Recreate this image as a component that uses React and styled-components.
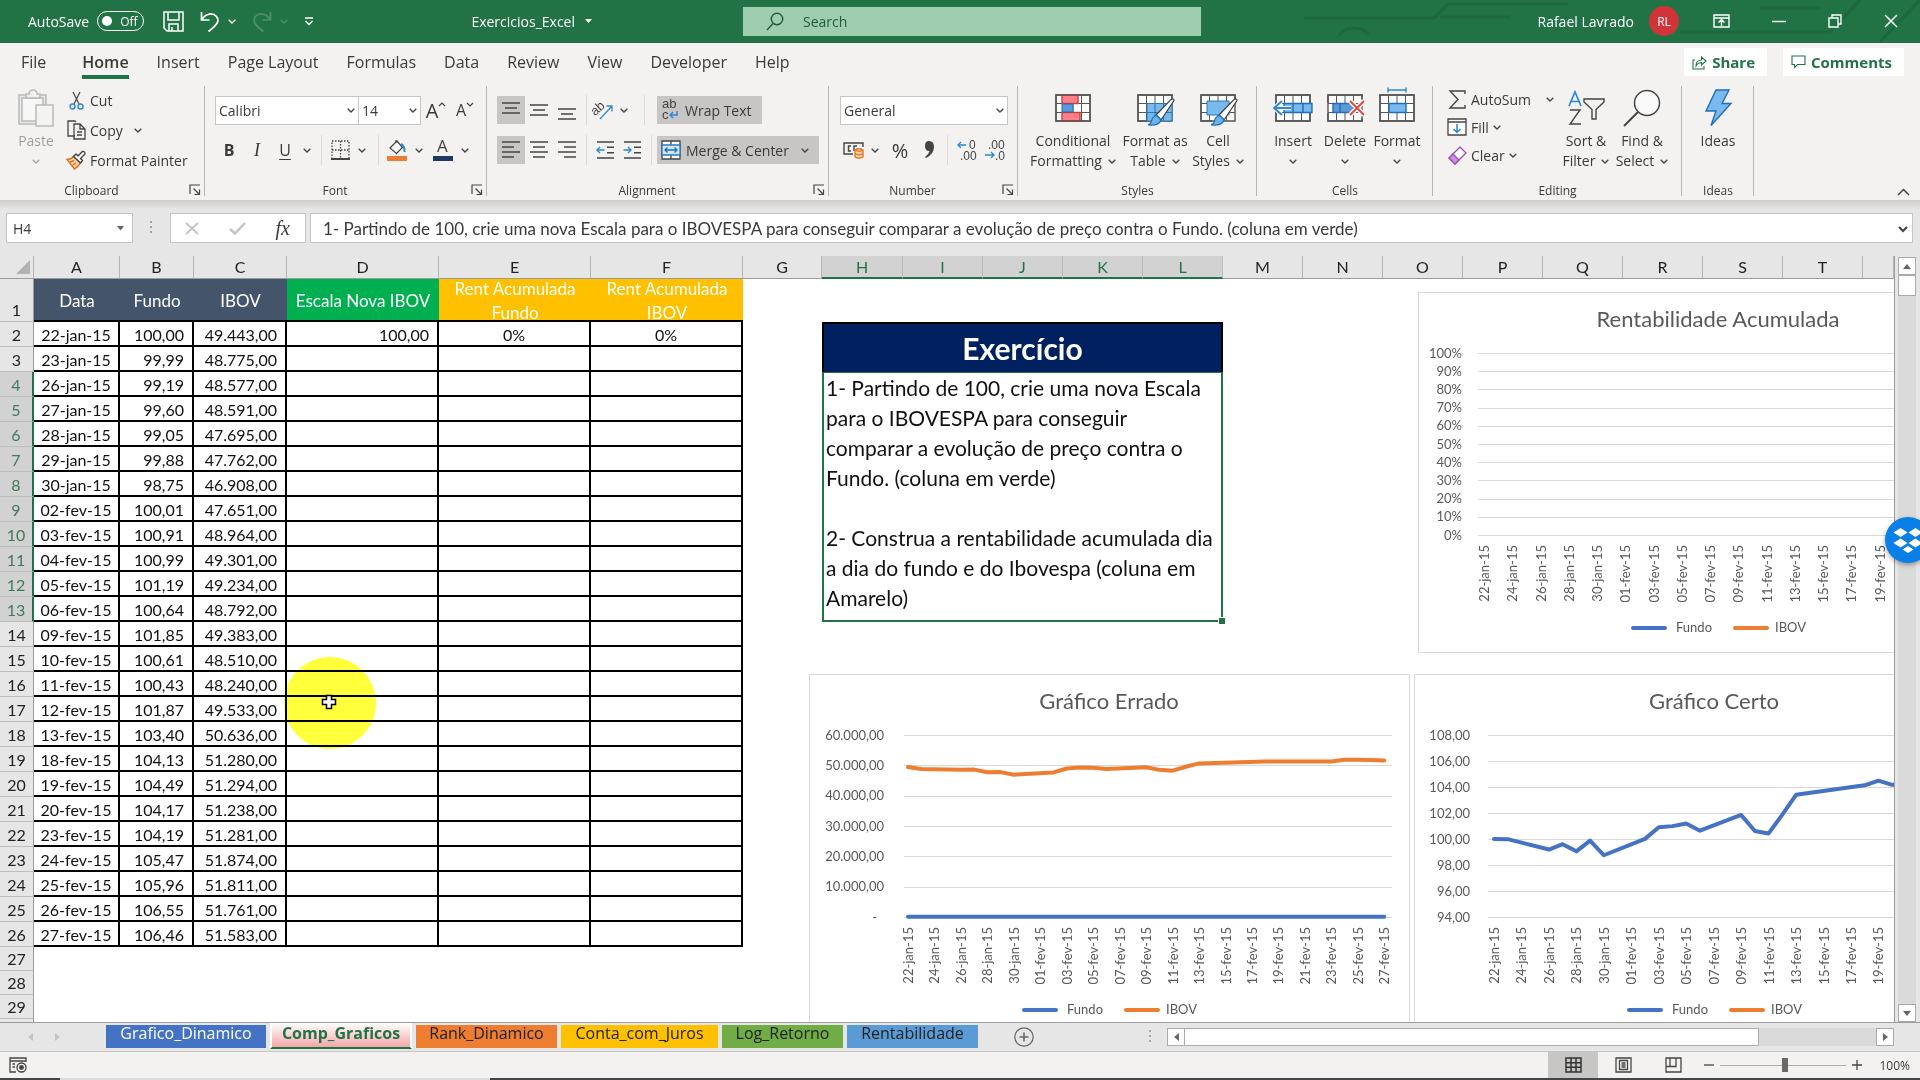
import React from "react";
import styled, { createGlobalStyle, css } from "styled-components";

const UI = `"Open Sans", "Noto Sans", sans-serif`;
const CELL = `Lato, "Open Sans", sans-serif`;
const GREEN = "#217346";
const BLUE = "#4472c4";
const ORANGE = "#ed7d31";

const Global = createGlobalStyle`
  *, *::before, *::after { box-sizing: border-box; }
  html, body { margin: 0; padding: 0; }
  body { font-family: ${UI}; color: #3b3a39; background: #e6e6e6; overflow: hidden; }
  button, input, select { font: inherit; color: inherit; margin: 0; }
  button { background: none; border: 0; padding: 0; white-space: nowrap; }
  svg { display: block; flex: none; overflow: visible; }
`;

const Page = styled.div`
  height: 100vh;
  display: flex;
  flex-direction: column;
  position: relative;
  overflow: hidden;
`;

/* ---------- title bar ---------- */
const TitleBar = styled.header`
  height: 43px;
  flex: none;
  display: grid;
  grid-template-columns: minmax(0, 743fr) minmax(240px, 458fr) minmax(0, 719fr);
  align-items: center;
  background: ${GREEN};
  color: #fff;
  font-size: 14px;
  position: relative;
  border-bottom: 1px solid #2c6b48;
`;
const Circuit = styled.svg`
  position: absolute;
  top: 0;
  right: 0;
`;
const TitleLeft = styled.div`
  display: flex;
  align-items: center;
  padding: 0 151px 0 28px;
`;
const SwitchLabel = styled.label`
  display: flex;
  align-items: center;
  gap: 8px;
`;
const Pill = styled.span`
  width: 47px;
  height: 20px;
  border: 1px solid #fff;
  border-radius: 10px;
  display: flex;
  align-items: center;
  gap: 8px;
  padding-left: 4px;
  font-size: 12px;
`;
const SwitchInput = styled.input`
  appearance: none;
  width: 10px;
  height: 10px;
  border-radius: 50%;
  background: #fff;
`;
const QuickTools = styled.div`
  display: flex;
  align-items: center;
  gap: 16px;
  margin-left: 19px;
`;
const ToolPair = styled.button`
  display: flex;
  align-items: center;
  gap: 8px;
  opacity: ${(p) => (p.$faded ? 0.2 : 1)};
`;
const FileName = styled.button`
  display: flex;
  align-items: center;
  gap: 10px;
  margin-left: auto;
`;
const Search = styled.label`
  height: 29px;
  background: #9fcdb0;
  color: #1f5c3a;
  display: flex;
  align-items: center;
  gap: 19px;
  padding-left: 23px;
`;
const SearchInput = styled.input`
  flex: 1;
  min-width: 0;
  border: 0;
  outline: 0;
  background: none;
  padding: 0;
  &::placeholder { color: #1f5c3a; opacity: 1; }
`;
const TitleRight = styled.div`
  display: flex;
  justify-content: flex-end;
  align-items: center;
  padding-right: 22px;
  position: relative;
`;
const Avatar = styled.span`
  width: 30px;
  height: 30px;
  margin: 0 34px 0 15px;
  border-radius: 50%;
  background: #d13438;
  font-size: 12px;
  display: flex;
  align-items: center;
  justify-content: center;
`;
const WindowButtons = styled.div`
  display: flex;
  align-items: center;
  gap: 42px;
`;

/* ---------- menu tabs ---------- */
const MenuBar = styled.nav`
  height: 39px;
  flex: none;
  display: flex;
  align-items: flex-start;
  gap: 28px;
  padding: 0 16px 0 21px;
  background: #f3f2f1;
  font-size: 16px;
`;
const MenuTab = styled.button`
  height: 36px;
  line-height: 26px;
  padding-top: 6px;
  border-bottom: 4px solid transparent;
  ${(p) =>
    p.$active &&
    css`
      font-weight: 600;
      margin-left: 8px;
      border-color: ${GREEN};
    `}
`;
const MenuActions = styled.div`
  display: flex;
  gap: 16px;
  margin: 5px 0 0 auto;
`;
const ActionButton = styled.button`
  height: 28px;
  display: flex;
  align-items: center;
  gap: 5px;
  padding: 0 12px 0 8px;
  background: #fff;
  color: ${GREEN};
  font-size: 15px;
  font-weight: 700;
`;

/* ---------- ribbon ---------- */
const Ribbon = styled.div`
  height: 118px;
  flex: none;
  display: flex;
  background: #f3f2f1;
  font-size: 14px;
`;
const Group = styled.section`
  width: ${(p) => p.$w}px;
  flex: none;
  display: flex;
  flex-direction: column;
  position: relative;
  &::after {
    content: "";
    position: absolute;
    right: 0;
    top: 4px;
    bottom: 4px;
    width: 1px;
    background: #b8b6b4;
  }
`;
const GroupBody = styled.div`
  flex: 1;
  display: flex;
  padding: ${(p) => p.$pad};
`;
const GroupFooter = styled.footer`
  height: 18px;
  line-height: 18px;
  font-size: 12px;
  text-align: center;
  padding-right: ${(p) => (p.$launch ? 22 : 0)}px;
`;
const Launcher = styled.button`
  position: absolute;
  right: 4px;
  bottom: 4px;
`;
const Stack = styled.div`
  display: flex;
  flex-direction: column;
  gap: ${(p) => p.$gap || 0}px;
  width: ${(p) => (p.$w ? `${p.$w}px` : "auto")};
`;
const Row = styled.div`
  display: flex;
  align-items: center;
  height: 28px;
`;
const BigButton = styled.button`
  width: ${(p) => p.$w}px;
  display: flex;
  flex-direction: column;
  align-items: center;
  line-height: 20px;
  align-self: flex-start;
  opacity: ${(p) => (p.$faded ? 0.45 : 1)};
`;
const BigIcon = styled.span`
  height: 46px;
  display: flex;
  align-items: center;
`;
const BigLine = styled.span`
  display: flex;
  align-items: center;
  justify-content: center;
  gap: 6px;
  min-height: 20px;
`;
const SmallButton = styled.button`
  height: ${(p) => p.$h}px;
  display: flex;
  align-items: center;
  gap: ${(p) => p.$gap || 6}px;
`;
const SmallIcon = styled.span`
  width: 20px;
  display: flex;
  justify-content: center;
`;
const Tool = styled.button`
  width: ${(p) => p.$w || 28}px;
  height: 28px;
  display: flex;
  align-items: center;
  justify-content: center;
  background: ${(p) => (p.$on ? "#c8c6c4" : "none")};
  font-size: 16px;
`;
const Caret = styled.span`
  align-self: flex-start;
  padding-top: 6px;
`;
const WideTool = styled.button`
  height: 28px;
  display: flex;
  align-items: center;
  gap: 5px;
  padding: 0 10px 0 4px;
  background: #c8c6c4;
`;
const Divider = styled.span`
  width: 1px;
  height: 30px;
  margin: 0 ${(p) => p.$m || 8}px;
  background: #dddbd9;
`;
const Combo = styled.span`
  position: relative;
  width: ${(p) => p.$w}px;
  height: 29px;
  display: flex;
  align-items: center;
  background: #fff;
  border: 1px solid #c8c6c4;
  & + & { border-left: 0; }
  svg { position: absolute; right: 3px; pointer-events: none; }
`;
const ComboSelect = styled.select`
  appearance: none;
  width: 100%;
  height: 100%;
  border: 0;
  background: none;
  padding: 0 0 0 3px;
  outline: 0;
`;
const Glyph = styled.span`
  font-size: ${(p) => p.$s || 16}px;
  font-weight: ${(p) => p.$wt || 400};
  font-style: ${(p) => (p.$it ? "italic" : "normal")};
  font-family: ${(p) => (p.$serif ? `"Liberation Serif", serif` : UI)};
  text-decoration: ${(p) => (p.$u ? "underline" : "none")};
  text-underline-offset: 3px;
`;
const Collapse = styled.button`
  margin: auto 10px 4px auto;
`;

/* ---------- formula bar ---------- */
const FormulaBar = styled.div`
  height: 56px;
  flex: none;
  display: flex;
  align-items: flex-start;
  padding: 13px 7px 0 6px;
  background: linear-gradient(#cfcdcb, #e6e6e6 9px);
  font-size: 14px;
`;
const NameBox = styled.label`
  position: relative;
  width: 127px;
  height: 30px;
  border: 1px solid #c6c6c6;
  background: #fff;
  display: flex;
  align-items: center;
  svg { position: absolute; right: 8px; }
`;
const PlainInput = styled.input`
  width: 100%;
  height: 100%;
  border: 0;
  outline: 0;
  background: none;
  padding: 0 0 0 ${(p) => p.$pl}px;
`;
const DotHandle = styled.span`
  width: 37px;
  height: 30px;
  display: flex;
  align-items: center;
  justify-content: center;
`;
const FormulaActions = styled.div`
  width: 136px;
  height: 30px;
  margin-right: 4px;
  border: 1px solid #c6c6c6;
  background: #fff;
  display: flex;
  align-items: center;
  justify-content: space-between;
  padding: 0 15px 0 14px;
`;
const FormulaField = styled.label`
  position: relative;
  flex: 1;
  height: 30px;
  border: 1px solid #c6c6c6;
  background: #fff;
  font-family: ${CELL};
  font-size: 17px;
  svg { position: absolute; right: 4px; top: 12px; }
`;

/* ---------- sheet ---------- */
const Workspace = styled.main`
  flex: 1;
  min-height: 0;
  display: flex;
`;
const Sheet = styled.div`
  flex: 1;
  min-width: 0;
  position: relative;
  overflow: hidden;
  background: #fff;
  border-right: 1px solid #9b9b9b;
`;
const Grid = styled.table`
  width: 100%;
  table-layout: fixed;
  border-collapse: separate;
  border-spacing: 0;
  font-family: ${CELL};
  font-size: 16px;
  line-height: 20px;
  color: #111;
  th, td { padding: 0; }
`;
const ColHead = styled.th`
  height: 23px;
  font-weight: 400;
  background: ${(p) => (p.$on ? "#d2d2d2" : "#e6e6e6")};
  color: ${(p) => (p.$on ? GREEN : "#222")};
  border-right: 1px solid ${(p) => (p.$on ? "#bdbdbd" : "#b5b5b5")};
  border-bottom: ${(p) => (p.$on ? `2px solid ${GREEN}` : "1px solid #9b9b9b")};
`;
const Corner = styled(ColHead)`
  svg { margin-left: 16px; }
`;
const GridRow = styled.tr`
  height: ${(p) => p.$h}px;
`;
const RowHead = styled.th`
  font-weight: 400;
  background: ${(p) => (p.$on ? "#d2d2d2" : "#e6e6e6")};
  color: ${(p) => (p.$on ? "#3f7a5a" : "#222")};
  border-bottom: 1px solid #bdbdbd;
  border-right: ${(p) => (p.$on ? `2px solid ${GREEN}` : "1px solid #9b9b9b")};
  vertical-align: bottom;
  && { padding-bottom: 1px; }
`;
const HeadCell = styled.td`
  background: ${(p) => p.$bg};
  color: #fff;
  box-shadow: inset 0 -2px #000;
  font-size: 17px;
`;
const HeadText = styled.div`
  height: 43px;
  overflow: hidden;
  display: flex;
  align-items: center;
  justify-content: center;
  text-align: center;
  line-height: 24px;
  white-space: pre-line;
`;
const DataCell = styled.td`
  border-right: 2px solid #000;
  border-bottom: 2px solid #000;
  text-align: ${(p) => p.$align || "right"};
  && {
    padding-top: 2px;
    padding-right: ${(p) => (p.$align === "center" ? 0 : 8)}px;
  }
`;
const TaskTitle = styled.td`
  background: #002060;
  border: 2px solid #000;
  border-bottom: 0;
  color: #fff;
  text-align: center;
  font-size: 30px;
  font-weight: 700;
`;
const TaskBody = styled.td`
  position: relative;
  border: 2px solid ${GREEN};
  border-top-width: 1px;
  vertical-align: top;
  font-size: 21px;
  line-height: 30px;
  white-space: pre;
  && { padding-left: 2px; }
  &::after {
    content: "";
    position: absolute;
    right: -4px;
    bottom: -4px;
    width: 7px;
    height: 7px;
    background: ${GREEN};
    border: 1px solid #fff;
    border-right: 0;
    border-bottom: 0;
  }
`;
const ChartFrame = styled.figure`
  position: absolute;
  left: ${(p) => p.$x}px;
  top: ${(p) => p.$y}px;
  width: 601px;
  height: 361px;
  margin: 0;
  background: #fff;
  border: 1px solid #d9d9d9;
  font-family: ${CELL};
  font-size: 13px;
  svg { margin: -1px; }
  text { fill: #595959; }
`;
const CursorSpot = styled.div`
  position: absolute;
  left: 284px;
  top: 401px;
  width: 92px;
  height: 92px;
  border-radius: 50%;
  background: #ffff3c;
  mix-blend-mode: multiply;
`;
const CursorCross = styled.svg`
  position: absolute;
  left: 321px;
  top: 438px;
`;
const ScrollColumn = styled.div`
  width: 25px;
  display: flex;
  flex-direction: column;
  padding: 1px 3px 0;
  background: #e6e6e6;
`;
const ScrollButton = styled.button`
  width: 18px;
  height: 18px;
  flex: none;
  background: #fff;
  border: 1px solid #ababab;
  display: flex;
  align-items: center;
  justify-content: center;
`;
const VTrack = styled.div`
  width: 18px;
  flex: 1;
  background: #dadada;
`;
const VThumb = styled.div`
  height: 21px;
  background: #fff;
  border: 1px solid #ababab;
`;
const DropboxBadge = styled.button`
  position: absolute;
  right: -11px;
  top: 517px;
  width: 46px;
  height: 46px;
  border-radius: 50%;
  background: #0a7fe8;
  box-shadow: 0 2px 5px rgba(0, 0, 0, 0.35);
  display: flex;
  align-items: center;
  justify-content: center;
`;

/* ---------- sheet tabs ---------- */
const TabBar = styled.div`
  height: 29px;
  flex: none;
  display: flex;
  align-items: flex-start;
  border-top: 1px solid #9b9b9b;
  background: #e6e6e6;
`;
const TabArrows = styled.div`
  width: 104px;
  height: 28px;
  display: flex;
  align-items: center;
  gap: 22px;
  padding-left: 28px;
`;
const SheetTab = styled.button`
  width: ${(p) => p.$w}px;
  height: 23px;
  margin: 2px 2px 0;
  line-height: 17px;
  padding-bottom: 6px;
  font-size: 16px;
  text-align: center;
  background: ${(p) => p.$bg};
  color: ${(p) => p.$fg || "#222"};
  ${(p) =>
    p.$active &&
    css`
      height: 26px;
      margin-top: 0;
      padding-bottom: 4px;
      font-weight: 700;
      border: 2px solid #fff;
      border-top: 0;
      border-bottom: 2px solid ${GREEN};
      background: linear-gradient(#fff, #f4a6a6);
    `}
`;
const AddTab = styled.button`
  height: 28px;
  margin-left: 34px;
  display: flex;
  align-items: center;
`;
const TabSpacer = styled.span`
  flex: 1;
  height: 28px;
  display: flex;
  align-items: center;
  justify-content: flex-end;
  padding-right: 15px;
`;
const HScroll = styled.div`
  width: 727px;
  margin: 5px 26px 0 0;
  display: flex;
`;
const HTrack = styled.div`
  flex: 1;
  height: 18px;
  background: #dadada;
`;
const HThumb = styled.div`
  width: 83%;
  height: 18px;
  background: #fff;
  border: 1px solid #ababab;
  border-left: 0;
`;

/* ---------- status bar ---------- */
const StatusBar = styled.footer`
  height: 27px;
  flex: none;
  display: flex;
  align-items: center;
  padding: 0 10px 0 9px;
  background: #f3f2f1;
  border-top: 1px solid #c8c6c4;
  font-size: 12px;
`;
const Views = styled.div`
  display: flex;
  margin-left: auto;
`;
const ViewButton = styled.button`
  width: 50px;
  height: 26px;
  display: flex;
  align-items: center;
  justify-content: center;
  background: ${(p) => (p.$on ? "#c8c6c4" : "none")};
`;
const ZoomControls = styled.div`
  display: flex;
  align-items: center;
  gap: 6px;
  padding-left: 6px;
`;
const ZoomRange = styled.input`
  appearance: none;
  width: 126px;
  height: 16px;
  background: linear-gradient(#b0aeac, #b0aeac) center / 100% 1px no-repeat;
  &::-webkit-slider-thumb {
    appearance: none;
    width: 6px;
    height: 14px;
    background: #6b6967;
  }
`;
const ZoomValue = styled.span`
  margin-left: 11px;
`;
const Edge = styled.div`
  height: 2px;
  flex: none;
  background: linear-gradient(90deg, #444 0 60px, #dcdcdc 60px 490px, #444 490px);
`;

/* ---------- icons ---------- */
const Chev = ({ c = "#444", w = 8 }) => (
  <svg width={w} height="5" viewBox="0 0 8 5" fill="none" stroke={c} strokeWidth="1.3">
    <path d="M.7.7 4 4 7.3.7" />
  </svg>
);
const Tri = ({ d = "M0 0h8L4 5z", w = 8, h = 5, c = "#666" }) => (
  <svg width={w} height={h} fill={c}>
    <path d={d} />
  </svg>
);
const LaunchIcon = () => (
  <svg width="12" height="12" viewBox="0 0 12 12" fill="none" stroke="#444" strokeWidth="1.2">
    <path d="M1 10V1h10M4.500 4.500l6 6M10.500 5.500v5h-5" />
  </svg>
);
const Lines = ({ rows }) => (
  <svg width="18" height="22" stroke="#444" strokeWidth="1.5">
    {rows.map(([x1, x2, y]) => (
      <path key={y} d={`M${x1} ${y}H${x2}`} />
    ))}
  </svg>
);
const Indent = ({ out }) => (
  <svg width="19" height="20" viewBox="0 0 19 20" fill="none" stroke="#444" strokeWidth="1.4">
    <path d="M1 2h17M11 7.300h7M11 12.700h7M1 18h17" />
    <path
      stroke="#2b88d8"
      d={out ? "M8.500 10H1M4 7l-3 3 3 3" : "M.5 10H8M5 7l3 3-3 3"}
    />
  </svg>
);
const TableBase = ({ children, w = 36 }) => (
  <svg width={w} height="36" viewBox="0 0 36 36" fill="none" stroke="#555" strokeWidth="1.4">
    {children}
  </svg>
);
const GridLines = () => (
  <>
    <path fill="#fff" d="M1 5h34v26H1z" />
    <path strokeWidth="1" d="M1 13.500h34M1 22.500h34M9.500 5v26M18 5v26M26.500 5v26" />
  </>
);
const Brush = () => (
  <>
    <path fill="#fff" stroke="#444" strokeWidth="1.200" d="M19 25 34 9.500q3-1.500 3 1L24 30z" />
    <path fill="#6cb2eb" stroke="#1e6fb8" strokeWidth="1.200" d="M11 35q3-1 3.500-4 1-5 5.500-5.500l4 4.500q-2 6-13 5z" />
  </>
);
const IconText = styled.text`
  font-family: "Liberation Sans", sans-serif;
  font-size: ${(p) => p.$s || 12}px;
  fill: #444;
  stroke: none;
`;

const icons = {
  save: (
    <svg width="21" height="21" viewBox="0 0 21 21" fill="none" stroke="#fff" strokeWidth="1.5">
      <path d="M1 1h19v19H4l-3-3zM5 1v8h11V1M6 20v-7h9v7M9 16v4" />
    </svg>
  ),
  undo: (
    <svg width="20" height="21" viewBox="0 0 20 21" fill="none" stroke="#fff" strokeWidth="1.7">
      <path d="M1.500 1v8h8M2 8.500C6 2 13 1.500 16.500 5.500 20 10 17 14 8.500 20.500" />
    </svg>
  ),
  redo: (
    <svg width="20" height="21" viewBox="0 0 20 21" fill="none" stroke="#fff" strokeWidth="1.7">
      <path d="M18.500 1v8h-8M18 8.500C14 2 7 1.500 3.500 5.500 0 10 3 14 11.500 20.500" />
    </svg>
  ),
  more: (
    <svg width="10" height="9" fill="none" stroke="#fff" strokeWidth="1.3">
      <path d="M1 1h8M1.500 4 5 7.500 8.500 4" />
    </svg>
  ),
  search: (
    <svg width="18" height="19" viewBox="0 0 18 19" fill="none" stroke="#1f5c3a" strokeWidth="1.4">
      <circle cx="11" cy="7" r="5.700" />
      <path d="m7 11.500-6 6.500" />
    </svg>
  ),
  ribbonMode: (
    <svg width="17" height="14" viewBox="0 0 17 14" fill="none" stroke="#fff" strokeWidth="1.4">
      <path d="M1 1h15v12H1zM1 4h15M8.500 12V6M5.500 8.500l3-3 3 3" />
    </svg>
  ),
  minimize: (
    <svg width="14" height="14" stroke="#fff" strokeWidth="1.4">
      <path d="M0 7.500h14" />
    </svg>
  ),
  restore: (
    <svg width="14" height="14" viewBox="0 0 14 14" fill="none" stroke="#fff" strokeWidth="1.4">
      <path d="M1 4h9v9H1zM4 4V1h9v9h-3" />
    </svg>
  ),
  close: (
    <svg width="14" height="14" stroke="#fff" strokeWidth="1.5">
      <path d="m1 1 12 12M13 1 1 13" />
    </svg>
  ),
  share: (
    <svg width="15" height="15" viewBox="0 0 15 15" fill="none" stroke={GREEN} strokeWidth="1.1">
      <path d="M3 5H1v9h11v-3M4 11c0-4 2-6 5.500-6V2l4.500 4-4.500 4V7.500C7 7.500 5.500 8.500 4 11z" />
    </svg>
  ),
  comment: (
    <svg width="15" height="14" viewBox="0 0 15 14" fill="none" stroke={GREEN} strokeWidth="1.1">
      <path d="M1 1h13v8.500H6.500L3.500 12.500v-3H1z" />
    </svg>
  ),
  paste: (
    <svg width="36" height="38" viewBox="0 0 36 38" fill="none" stroke="#777" strokeWidth="1.5">
      <path fill="#ddd" d="M1 6h27v29H1z" />
      <path fill="#fff" d="M4 9h21v23H4z" />
      <path fill="#eee" d="M8 9V5h3q0-4 4-4t4 4h3v4z" />
      <path fill="#f5f5f5" d="M18 16h17v21H18z" />
    </svg>
  ),
  cut: (
    <svg width="15" height="19" viewBox="0 0 15 19" fill="none" stroke="#444" strokeWidth="1.2">
      <path d="M4 1 10 13M11 1 5 13" />
      <g stroke="#2b88d8" strokeWidth="1.4">
        <circle cx="3.500" cy="15.500" r="2.500" />
        <circle cx="11.500" cy="15.500" r="2.500" />
      </g>
    </svg>
  ),
  copy: (
    <svg width="19" height="20" viewBox="0 0 19 20" fill="none" stroke="#444" strokeWidth="1.3">
      <path d="M8 16H1V1h7l1 1M7 4h6l5 5v10H7zM13 4v5h5M10 12h5M10 15h5" />
    </svg>
  ),
  painter: (
    <svg width="20" height="20" viewBox="0 0 20 20" fill="none" strokeWidth="1.4">
      <path fill="#fbd3a8" stroke="#e0701c" d="M1 9.500q4 0 6.500-3l7 6.500q-3 4.500-6 6z" />
      <path stroke="#e0701c" d="m4 12 4-1.500M6.500 15l3.500-2" />
      <path fill="#fff" stroke="#444" d="M7.500 6.500 10 4l2 2 4.500-4.500q2.500-.5 2.500 2.500L14.500 8.500l2 2-2 2.500z" />
    </svg>
  ),
  growFont: (
    <svg width="8" height="5" fill="none" stroke="#444" strokeWidth="1.2">
      <path d="m1 4 3-3 3 3" />
    </svg>
  ),
  shrinkFont: (
    <svg width="8" height="5" fill="none" stroke="#444" strokeWidth="1.2">
      <path d="m1 1 3 3 3-3" />
    </svg>
  ),
  borders: (
    <svg width="19" height="20" viewBox="0 0 19 20" fill="none" stroke="#444" strokeWidth="1.300">
      <path strokeDasharray="1.500 1.500" d="M1 19V1h17v18M9.500 1v18M1 10h17" />
      <path d="M0 19h19" strokeWidth="2" />
    </svg>
  ),
  fill: (
    <svg width="20" height="22" viewBox="0 0 20 22" fill="none" stroke="#444" strokeWidth="1.200">
      <path fill="#fff" d="m3 9 7-7 5.500 6.500-6 6z" />
      <path d="M9 4V1" />
      <path stroke="#2b88d8" strokeWidth="2" d="M14 5q4 2 3.500 8" />
      <path fill={ORANGE} stroke="none" d="M0 17h20v5H0z" />
    </svg>
  ),
  orientation: (
    <svg width="24" height="20" viewBox="0 0 24 20" fill="none" stroke="#2b88d8" strokeWidth="1.300">
      <IconText x="-1" y="14" $s={13} transform="rotate(-42 4 10)">ab</IconText>
      <path d="M8 19 20 6M14.500 6H20v5.500" />
    </svg>
  ),
  wrap: (
    <svg width="19" height="22" viewBox="0 0 19 22" fill="none" stroke="#2b88d8" strokeWidth="1.500">
      <IconText x="1" y="9" $s={13}>ab</IconText>
      <IconText x="1" y="20" $s={13}>c</IconText>
      <path d="M16 12v4H9.500M12 13l-3 3 3 3" />
    </svg>
  ),
  merge: (
    <svg width="20" height="20" viewBox="0 0 20 20" fill="none" stroke="#444" strokeWidth="1.300">
      <path fill="#fff" d="M1 1h18v18H1z" />
      <path d="M10 1v18" />
      <path fill="#cfe6f9" stroke="#2b78b8" d="M1 5h18v10H1z" />
      <path stroke="#1e6fb8" d="M4 10h12M6.500 7.500 4 10l2.500 2.500M13.500 7.500 16 10l-2.500 2.500" />
    </svg>
  ),
  currency: (
    <svg width="21" height="18" viewBox="0 0 21 18" fill="none" stroke="#444" strokeWidth="1.400">
      <path d="M10 13H1V2h19v4M8 5H5.500v5H8M14 5h-3v5" />
      <path fill="#fbd3b0" stroke="#e07a1c" d="M12 9q4-2.500 8 0v7q-4 2.500-8 0zM12 9q4 2.500 8 0M12 12.500q4 2.500 8 0" />
    </svg>
  ),
  incDecimal: (
    <svg width="20" height="22" viewBox="0 0 20 22" fill="none" stroke="#2b88d8" strokeWidth="1.300">
      <IconText x="12" y="10">0</IconText>
      <IconText x="3" y="21">.00</IconText>
      <path d="M9 6H1M4 3 1 6l3 3" />
    </svg>
  ),
  decDecimal: (
    <svg width="20" height="22" viewBox="0 0 20 22" fill="none" stroke="#2b88d8" strokeWidth="1.300">
      <IconText x="3" y="10">.00</IconText>
      <IconText x="10" y="21">.0</IconText>
      <path d="M0 16h9M6 13l3 3-3 3" />
    </svg>
  ),
  conditional: (
    <TableBase>
      <GridLines />
      <path fill="#ff8088" stroke="#d9363e" d="M7 5h16v8.500H7zM7 22.500h18V31H7z" />
      <path fill="#5b9bd5" stroke="#1e6fb8" strokeWidth="1" d="M7 14h11v8H7z" />
      <path d="M1 5h34v26H1z" />
    </TableBase>
  ),
  formatTable: (
    <TableBase w={38}>
      <GridLines />
      <path fill="#79b9ee" stroke="#2b78b8" strokeWidth="1" d="M10 13.500h25V31H10zM10 22.500h25M18 13.500V31M26.500 13.500V31" />
      <path d="M10 31H1V5h34v7" />
      <Brush />
    </TableBase>
  ),
  cellStyles: (
    <TableBase w={38}>
      <GridLines />
      <path fill="#79b9ee" stroke="#2b78b8" strokeWidth="1" d="M7 11h22v14H7z" />
      <path d="M12 31H1V5h34v7" />
      <Brush />
    </TableBase>
  ),
  insert: (
    <TableBase w={38}>
      <GridLines />
      <path d="M1 5h34v26H1z" />
      <path fill="#79b9ee" stroke="#1e6fb8" d="M9 13.500h28v9H9zM18 13.500v9M28 13.500v9" />
      <path stroke="#f3f2f1" strokeWidth="4" d="M-1 18h17M7 11l-8 7 8 7" />
      <path stroke="#2b88d8" strokeWidth="1.800" d="M-1 18h17M7 11l-8 7 8 7" />
    </TableBase>
  ),
  del: (
    <TableBase w={38}>
      <GridLines />
      <path d="M1 13V5h34v4M1 23v8h34v-3" />
      <path fill="#5b9bd5" stroke="#1e6fb8" d="M6 13.500h20v9H6zM13 13.500v9" />
      <path stroke="#f3f2f1" strokeWidth="5" d="m23 11 14 14M37 11 23 25" />
      <path stroke="#e3483d" strokeWidth="1.800" d="m23 11 14 14M37 11 23 25" />
    </TableBase>
  ),
  format: (
    <TableBase>
      <GridLines />
      <path d="M1 5h34v26H1z" />
      <path fill="#79b9ee" stroke="#1e6fb8" d="M10 13.500h17v9H10z" />
      <path stroke="#2b88d8" d="M9 0h18M9-2.500v5M27-2.500v5" />
    </TableBase>
  ),
  sigma: (
    <svg width="17" height="19" viewBox="0 0 17 19" fill="none" stroke="#444" strokeWidth="1.400">
      <path d="M16 4V1H1l8 8.500L1 18h15v-3" />
    </svg>
  ),
  fillDown: (
    <svg width="20" height="18" viewBox="0 0 20 18" fill="none" stroke="#444" strokeWidth="1.300">
      <path fill="#fff" d="M1 1h18v16H1zM1 4h18" />
      <path stroke="#2b88d8" strokeWidth="1.500" d="M10 6v8.500M6.500 11l3.500 3.500 3.500-3.500" />
    </svg>
  ),
  eraser: (
    <svg width="19" height="19" viewBox="0 0 19 19" fill="none" stroke="#9b4fb0" strokeWidth="1.300">
      <path fill="#fff" d="M12 1 18 7 7 18 1 12z" />
      <path fill="#cf8fe0" d="m5 8 6 6-4 4-6-6z" />
    </svg>
  ),
  sort: (
    <svg width="38" height="36" viewBox="0 0 38 36" fill="none" stroke="#444" strokeWidth="1.400">
      <path stroke="#2b88d8" strokeWidth="1.700" d="M2 16 8 2l6 14M4 11.500h8" />
      <path d="M3 20h10L3 34h11M17 9h20v3l-8 7.500V29h-4v-9.500L17 12z" />
    </svg>
  ),
  find: (
    <svg width="38" height="38" viewBox="0 0 38 38" fill="none" stroke="#444" strokeWidth="1.500">
      <circle cx="24" cy="14" r="12.500" fill="#fafafa" />
      <path d="M15 23 1 37" strokeWidth="2" />
    </svg>
  ),
  bolt: (
    <svg width="28" height="38" viewBox="0 0 28 38" fill="#79b9ee" stroke="#1e6fb8" strokeWidth="1.400">
      <path d="M12 1h13l-7 13.500h9L7 36.500l5-14.500H2z" />
    </svg>
  ),
  cancel: (
    <svg width="14" height="13" stroke="#c4c4c4" strokeWidth="1.800">
      <path d="m1 1 12 11M13 1 1 12" />
    </svg>
  ),
  accept: (
    <svg width="17" height="13" fill="none" stroke="#c4c4c4" strokeWidth="2.500">
      <path d="m1 7 5 4.500L16 1" />
    </svg>
  ),
  macro: (
    <svg width="18" height="16" viewBox="0 0 18 16" fill="none" stroke="#444" strokeWidth="1.300">
      <path d="M7 15H1V1h16v4M1 4h16M3.500 7H6M3.500 10H6" />
      <circle cx="12.500" cy="10.500" r="4.500" />
      <circle cx="12.500" cy="10.500" r="1.800" fill="#444" />
    </svg>
  ),
  viewNormal: (
    <svg width="17" height="16" fill="none" stroke="#333" strokeWidth="1.500">
      <path d="M1 1h15v14H1zM6 1v14M11 1v14M1 5.700h15M1 10.300h15" />
    </svg>
  ),
  viewPage: (
    <svg width="17" height="16" fill="none" stroke="#444" strokeWidth="1.300">
      <path d="M1 1h15v14H1zM4.500 3.500h8v9h-8zM6.500 6h4M6.500 8h4M6.500 10h4" />
    </svg>
  ),
  viewBreak: (
    <svg width="17" height="16" fill="none" stroke="#444" strokeWidth="1.300">
      <path d="M1 15V1h15v14zM5 1v8.500h6V1M1 9.500h4" />
    </svg>
  ),
  plusCircle: (
    <svg width="20" height="20" fill="none" stroke="#666" strokeWidth="1.200">
      <circle cx="10" cy="10" r="9.200" />
      <path d="M10 5.500v9M5.500 10h9" strokeWidth="1.600" />
    </svg>
  ),
  dots: (
    <svg width="3" height="14" fill="#a5a5a5">
      <path d="M0 0h2v2H0zM0 5h2v2H0zM0 10h2v2H0z" />
    </svg>
  ),
  dropbox: (
    <svg width="30" height="26" viewBox="0 0 30 26" fill="#fff">
      <path d="m7.500 1 7 4.500-7 4.500-7-4.500zM22.500 1l7 4.500-7 4.500-7-4.500zM7.500 11.500l7 4.500-7 4.500-7-4.500zM22.500 11.500l7 4.500-7 4.500-7-4.500zM15 19l5.500 3.500L15 26l-5.500-3.500z" />
    </svg>
  ),
};

/* ---------- data ---------- */
const quotes = [
  ["22-jan-15", "100,00", "49.443,00"],
  ["23-jan-15", "99,99", "48.775,00"],
  ["26-jan-15", "99,19", "48.577,00"],
  ["27-jan-15", "99,60", "48.591,00"],
  ["28-jan-15", "99,05", "47.695,00"],
  ["29-jan-15", "99,88", "47.762,00"],
  ["30-jan-15", "98,75", "46.908,00"],
  ["02-fev-15", "100,01", "47.651,00"],
  ["03-fev-15", "100,91", "48.964,00"],
  ["04-fev-15", "100,99", "49.301,00"],
  ["05-fev-15", "101,19", "49.234,00"],
  ["06-fev-15", "100,64", "48.792,00"],
  ["09-fev-15", "101,85", "49.383,00"],
  ["10-fev-15", "100,61", "48.510,00"],
  ["11-fev-15", "100,43", "48.240,00"],
  ["12-fev-15", "101,87", "49.533,00"],
  ["13-fev-15", "103,40", "50.636,00"],
  ["18-fev-15", "104,13", "51.280,00"],
  ["19-fev-15", "104,49", "51.294,00"],
  ["20-fev-15", "104,17", "51.238,00"],
  ["23-fev-15", "104,19", "51.281,00"],
  ["24-fev-15", "105,47", "51.874,00"],
  ["25-fev-15", "105,96", "51.811,00"],
  ["26-fev-15", "106,55", "51.761,00"],
  ["27-fev-15", "106,46", "51.583,00"],
];
const toNumber = (s) => parseFloat(s.replace(".", "").replace(",", "."));
const toDay = (s) => parseInt(s, 10) + (s.includes("jan") ? -22 : 9);
const seriesOf = (col) => quotes.map((q) => [toDay(q[0]), toNumber(q[col])]);
const dateLabels = Array.from({ length: 19 }, (_, i) => {
  const d = 22 + i * 2;
  return d <= 31 ? `${d}-jan-15` : `${String(d - 31).padStart(2, "0")}-fev-15`;
});
const columns = [
  ["A", 86], ["B", 74], ["C", 93], ["D", 152], ["E", 152], ["F", 152], ["G", 79], ["H", 81],
  ..."IJKLMNOPQRST".split("").map((c) => [c, 80]),
];
const headers = [
  ["Data", "#44546a"],
  ["Fundo", "#44546a"],
  ["IBOV", "#44546a"],
  ["Escala Nova IBOV", "#00b050"],
  ["Rent Acumulada\nFundo", "#ffc000"],
  ["Rent Acumulada\nIBOV", "#ffc000"],
];
const task = `1- Partindo de 100, crie uma nova Escala
para o IBOVESPA para conseguir
comparar a evolução de preço contra o
Fundo. (coluna em verde)

2- Construa a rentabilidade acumulada dia
a dia do fundo e do Ibovespa (coluna em
Amarelo)`;
const formula =
  "1- Partindo de 100, crie uma nova Escala para o IBOVESPA para conseguir comparar a evolução de preço contra o Fundo. (coluna em verde)";

/* ---------- chart ---------- */
function Chart({ x, y, title, titleX, titleY = 28, ticks, labelX, plot, first, day, series = [], labels = dateLabels, legendX, legendY = 336, swatch = 36 }) {
  const { x0, x1, top, bottom } = plot;
  const step = (bottom - top) / (ticks.length - 1);
  const place = ({ min, max, points }) =>
    points.map(([d, v]) => `${first + d * day},${bottom - ((v - min) / (max - min)) * (bottom - top)}`).join(" ");
  return (
    <ChartFrame $x={x} $y={y}>
      <svg width="601" height="361" role="img" aria-label={title}>
        <text x={titleX} y={titleY + 7} fontSize="22" textAnchor="middle">{title}</text>
        {ticks.map((t, i) => (
          <g key={t}>
            <path d={`M${x0} ${Math.round(top + i * step) + 0.5}H${x1}`} stroke="#d9d9d9" />
            <text x={t === "-" ? labelX - 7 : labelX} y={top + i * step + 4.5} textAnchor="end">{t}</text>
          </g>
        ))}
        {series.map((s) => (
          <polyline key={s.color} points={place(s)} fill="none" stroke={s.color} strokeWidth="4" strokeLinejoin="round" strokeLinecap="round" />
        ))}
        {labels.map((t, i) => (
          <text key={t} textAnchor="end" transform={`translate(${first + i * 2 * day + 5} ${bottom + 10}) rotate(-90)`}>{t}</text>
        ))}
        <path d={`M${legendX + 2} ${legendY}h${swatch - 4}`} stroke={BLUE} strokeWidth="4" strokeLinecap="round" />
        <text x={legendX + swatch + 9} y={legendY + 4}>Fundo</text>
        <path d={`M${legendX + 104} ${legendY}h${swatch - 4}`} stroke={ORANGE} strokeWidth="4" strokeLinecap="round" />
        <text x={legendX + 108 + swatch} y={legendY + 4}>IBOV</text>
      </svg>
    </ChartFrame>
  );
}

function SheetRow({ n }) {
  const on = n >= 4 && n <= 13;
  const q = quotes[n - 2];
  return (
    <GridRow $h={n > 26 ? 24 : 25}>
      <RowHead scope="row" $on={on}>{n < 30 ? n : ""}</RowHead>
      {q && (
        <>
          <DataCell $align="center">{q[0]}</DataCell>
          <DataCell>{q[1]}</DataCell>
          <DataCell>{q[2]}</DataCell>
          <DataCell>{n === 2 ? "100,00" : ""}</DataCell>
          <DataCell $align="center">{n === 2 ? "0%" : ""}</DataCell>
          <DataCell $align="center">{n === 2 ? "0%" : ""}</DataCell>
        </>
      )}
      {n === 2 && (
        <>
          <td />
          <TaskTitle colSpan={5} rowSpan={2}>Exercício</TaskTitle>
        </>
      )}
      {n === 4 && (
        <>
          <td />
          <TaskBody colSpan={5} rowSpan={10}>{task}</TaskBody>
        </>
      )}
    </GridRow>
  );
}

const Big = ({ w, icon, lines, chev, faded, lone }) => (
  <BigButton $w={w} $faded={faded}>
    <BigIcon>{icons[icon]}</BigIcon>
    {lines.map((l, i) => (
      <BigLine key={l}>
        {l}
        {chev && i === lines.length - 1 && <Chev />}
      </BigLine>
    ))}
    {lone && <BigLine><Chev /></BigLine>}
  </BigButton>
);
const Small = ({ h, icon, label, chev, gap }) => (
  <SmallButton $h={h} $gap={gap}>
    <SmallIcon>{icons[icon]}</SmallIcon>
    {label}
    {chev && <Chev />}
  </SmallButton>
);
const Footer = ({ label, launch }) => (
  <>
    <GroupFooter $launch={launch}>{label}</GroupFooter>
    {launch && <Launcher aria-label={`${label} settings`}><LaunchIcon /></Launcher>}
  </>
);

export default function App() {
  return (
    <Page>
      <Global />
      <TitleBar>
        <Circuit width="640" height="42" fill="none" stroke="#1b6039" strokeWidth="3" opacity=".6">
          <path d="M24 18h130l14-14h120M60 36a14 8 0 0 1 28 0M160 17h70M400 32h150l30-32M480 8h60M600 42l40-42" />
        </Circuit>
        <TitleLeft>
          <SwitchLabel>
            AutoSave
            <Pill>
              <SwitchInput type="checkbox" role="switch" aria-label="AutoSave" />
              Off
            </Pill>
          </SwitchLabel>
          <QuickTools>
            <ToolPair aria-label="Save">{icons.save}</ToolPair>
            <ToolPair aria-label="Undo">{icons.undo}<Chev c="#fff" /></ToolPair>
            <ToolPair aria-label="Redo" $faded>{icons.redo}<Chev c="#fff" /></ToolPair>
            <ToolPair aria-label="Customize toolbar">{icons.more}</ToolPair>
          </QuickTools>
          <FileName>Exercicios_Excel<Tri w={7} c="#fff" d="M0 0h7L3.500 4z" /></FileName>
        </TitleLeft>
        <Search>
          {icons.search}
          <SearchInput type="text" placeholder="Search" aria-label="Search" />
        </Search>
        <TitleRight>
          Rafael Lavrado
          <Avatar>RL</Avatar>
          <WindowButtons>
            <button aria-label="Ribbon display options">{icons.ribbonMode}</button>
            <button aria-label="Minimize">{icons.minimize}</button>
            <button aria-label="Restore">{icons.restore}</button>
            <button aria-label="Close">{icons.close}</button>
          </WindowButtons>
        </TitleRight>
      </TitleBar>

      <MenuBar>
        {["File", "Home", "Insert", "Page Layout", "Formulas", "Data", "Review", "View", "Developer", "Help"].map((t) => (
          <MenuTab key={t} $active={t === "Home"}>{t}</MenuTab>
        ))}
        <MenuActions>
          <ActionButton>{icons.share}Share</ActionButton>
          <ActionButton>{icons.comment}Comments</ActionButton>
        </MenuActions>
      </MenuBar>

      <Ribbon>
        <Group $w={205}>
          <GroupBody $pad="3px 0 0 6px">
            <Big w={60} icon="paste" lines={["Paste"]} lone faded />
            <Stack>
              <Small h={30} icon="cut" label="Cut" gap={4} />
              <Small h={30} icon="copy" label={<>Copy&nbsp;&nbsp;</>} chev gap={4} />
              <Small h={30} icon="painter" label="Format Painter" gap={4} />
            </Stack>
          </GroupBody>
          <Footer label="Clipboard" launch />
        </Group>

        <Group $w={282}>
          <GroupBody $pad="14px 0 0 10px">
            <Stack $gap={12}>
              <Row>
                <Combo $w={144}>
                  <ComboSelect aria-label="Font"><option>Calibri</option></ComboSelect>
                  <Chev />
                </Combo>
                <Combo $w={62}>
                  <ComboSelect aria-label="Font size"><option>14</option></ComboSelect>
                  <Chev />
                </Combo>
                <Tool $w={30} aria-label="Increase font size"><Glyph $s={20}>A</Glyph><Caret>{icons.growFont}</Caret></Tool>
                <Tool aria-label="Decrease font size"><Glyph $s={16}>A</Glyph><Caret>{icons.shrinkFont}</Caret></Tool>
              </Row>
              <Row>
                <Tool aria-label="Bold"><Glyph $wt={700}>B</Glyph></Tool>
                <Tool aria-label="Italic"><Glyph $it $serif $s={18}>I</Glyph></Tool>
                <Tool aria-label="Underline"><Glyph $u>U</Glyph></Tool>
                <Tool $w={16} aria-label="Underline style"><Chev /></Tool>
                <Divider $m={6} />
                <Tool $w={24} aria-label="Borders">{icons.borders}</Tool>
                <Tool $w={20} aria-label="Border style"><Chev /></Tool>
                <Divider $m={6} />
                <Tool $w={24} aria-label="Fill color">{icons.fill}</Tool>
                <Tool $w={20} aria-label="Fill colors"><Chev /></Tool>
                <Tool aria-label="Font color">
                  <svg width="20" height="24">
                    <text x="4" y="14" fontSize="17" fill="#444">A</text>
                    <path fill="#1f3864" d="M0 18h20v5H0z" />
                  </svg>
                </Tool>
                <Tool $w={16} aria-label="Font colors"><Chev /></Tool>
              </Row>
            </Stack>
          </GroupBody>
          <Footer label="Font" launch />
        </Group>

        <Group $w={342}>
          <GroupBody $pad="14px 0 0 10px">
            <Stack $gap={12}>
              <Row>
                <Tool $on aria-label="Top align"><Lines rows={[[0, 18, 4], [3, 15, 9], [0, 18, 14]]} /></Tool>
                <Tool aria-label="Middle align"><Lines rows={[[0, 18, 6], [3, 15, 11], [0, 18, 16]]} /></Tool>
                <Tool aria-label="Bottom align"><Lines rows={[[0, 18, 10], [3, 15, 15], [0, 18, 20]]} /></Tool>
                <Divider $m={5} />
                <Tool $w={24} aria-label="Orientation">{icons.orientation}</Tool>
                <Tool $w={16} aria-label="Orientation options"><Chev /></Tool>
                <Divider $m={12} />
                <WideTool>{icons.wrap}Wrap Text</WideTool>
              </Row>
              <Row>
                <Tool $on aria-label="Align left"><Lines rows={[[0, 18, 3], [0, 12, 8], [0, 18, 13], [0, 12, 18]]} /></Tool>
                <Tool aria-label="Center"><Lines rows={[[0, 18, 3], [3, 15, 8], [0, 18, 13], [3, 15, 18]]} /></Tool>
                <Tool aria-label="Align right"><Lines rows={[[0, 18, 3], [6, 18, 8], [0, 18, 13], [6, 18, 18]]} /></Tool>
                <Divider $m={5} />
                <Tool $w={26} aria-label="Decrease indent"><Indent out /></Tool>
                <Tool $w={28} aria-label="Increase indent"><Indent /></Tool>
                <Divider $m={5} />
                <WideTool>{icons.merge}Merge &amp; Center&nbsp;&nbsp;<Chev /></WideTool>
              </Row>
            </Stack>
          </GroupBody>
          <Footer label="Alignment" launch />
        </Group>

        <Group $w={189}>
          <GroupBody $pad="14px 0 0 11px">
            <Stack $gap={12}>
              <Row>
                <Combo $w={168}>
                  <ComboSelect aria-label="Number format"><option>General</option></ComboSelect>
                  <Chev />
                </Combo>
              </Row>
              <Row>
                <Tool $w={26} aria-label="Accounting format">{icons.currency}</Tool>
                <Tool $w={18} aria-label="Accounting options"><Chev /></Tool>
                <Tool $w={32} aria-label="Percent"><Glyph $s={20}>%</Glyph></Tool>
                <Tool $w={26} aria-label="Comma style">
                  <svg width="11" height="18" fill="#444"><path d="M5 0q5 0 5 6 0 7-8 11l-1-1q4-3 4.500-6Q1 10 1 5q0-5 4-5z" /></svg>
                </Tool>
                <Divider $m={5} />
                <Tool aria-label="Increase decimal">{icons.incDecimal}</Tool>
                <Tool aria-label="Decrease decimal">{icons.decDecimal}</Tool>
              </Row>
            </Stack>
          </GroupBody>
          <Footer label="Number" launch />
        </Group>

        <Group $w={239}>
          <GroupBody $pad="3px 0 0 13px">
            <Big w={84} icon="conditional" lines={["Conditional", "Formatting"]} chev />
            <Big w={80} icon="formatTable" lines={["Format as", "Table"]} chev />
            <Big w={46} icon="cellStyles" lines={["Cell", "Styles"]} chev />
          </GroupBody>
          <Footer label="Styles" />
        </Group>

        <Group $w={176}>
          <GroupBody $pad="3px 0 0 10px">
            <Big w={52} icon="insert" lines={["Insert"]} lone />
            <Big w={52} icon="del" lines={["Delete"]} lone />
            <Big w={52} icon="format" lines={["Format"]} lone />
          </GroupBody>
          <Footer label="Cells" />
        </Group>

        <Group $w={249}>
          <GroupBody $pad="3px 0 0 14px">
            <Stack $w={111}>
              <Small h={28} icon="sigma" label={<>AutoSum&nbsp;&nbsp;&nbsp;</>} chev gap={4} />
              <Small h={28} icon="fillDown" label="Fill" chev gap={4} />
              <Small h={28} icon="eraser" label="Clear" chev gap={4} />
            </Stack>
            <Big w={56} icon="sort" lines={["Sort &", "Filter"]} chev />
            <Big w={56} icon="find" lines={["Find &", "Select"]} chev />
          </GroupBody>
          <Footer label="Editing" />
        </Group>

        <Group $w={72}>
          <GroupBody $pad="3px 0 0 1px">
            <Big w={70} icon="bolt" lines={["Ideas"]} />
          </GroupBody>
          <Footer label="Ideas" />
        </Group>
        <Collapse aria-label="Collapse ribbon">
          <svg width="13" height="8" fill="none" stroke="#444" strokeWidth="1.500"><path d="m1 7 5.500-5.500L12 7" /></svg>
        </Collapse>
      </Ribbon>

      <FormulaBar>
        <NameBox>
          <PlainInput $pl={6} defaultValue="H4" aria-label="Name box" />
          <Tri w={7} d="M0 0h7L3.500 4.500z" />
        </NameBox>
        <DotHandle>{icons.dots}</DotHandle>
        <FormulaActions>
          <button aria-label="Cancel">{icons.cancel}</button>
          <button aria-label="Enter">{icons.accept}</button>
          <button aria-label="Insert function"><Glyph $it $serif $s={20}>fx</Glyph></button>
        </FormulaActions>
        <FormulaField>
          <PlainInput $pl={12} defaultValue={formula} aria-label="Formula" />
          <svg width="10" height="7" fill="none" stroke="#444" strokeWidth="2.200"><path d="m1 1 4 4 4-4" /></svg>
        </FormulaField>
      </FormulaBar>

      <Workspace>
        <Sheet>
          <Grid>
            <colgroup>
              <col width="34" />
              {columns.map(([c, w]) => <col key={c} width={w} />)}
              <col />
            </colgroup>
            <thead>
              <tr>
                <Corner aria-label="Select all"><Tri w={14} h={14} d="M14 0v14H0z" c="#b2b2b2" /></Corner>
                {columns.map(([c]) => <ColHead key={c} scope="col" $on={"HIJKL".includes(c)}>{c}</ColHead>)}
                <ColHead />
              </tr>
            </thead>
            <tbody>
              <GridRow $h={43}>
                <RowHead scope="row">1</RowHead>
                {headers.map(([t, bg]) => (
                  <HeadCell key={t} $bg={bg}><HeadText>{t}</HeadText></HeadCell>
                ))}
              </GridRow>
              {Array.from({ length: 29 }, (_, i) => <SheetRow key={i} n={i + 2} />)}
            </tbody>
          </Grid>

          <Chart
            x={1418} y={36} title="Rentabilidade Acumulada" titleX={300}
            ticks={["100%", "90%", "80%", "70%", "60%", "50%", "40%", "30%", "20%", "10%", "0%"]}
            labelX={44} plot={{ x0: 60, x1: 580, top: 61, bottom: 243 }} first={66} day={14.13} legendX={213}
            labels={dateLabels.slice(0, 15)}
          />
          <Chart
            x={809} y={418} title="Gráfico Errado" titleX={300}
            ticks={["60.000,00", "50.000,00", "40.000,00", "30.000,00", "20.000,00", "10.000,00", "-"]}
            labelX={75} plot={{ x0: 95, x1: 583, top: 61, bottom: 243 }} first={99} day={13.23} legendX={213}
            series={[
              { color: ORANGE, min: 0, max: 60000, points: seriesOf(2) },
              { color: BLUE, min: 0, max: 60000, points: seriesOf(1) },
            ]}
          />
          <Chart
            x={1414} y={418} title="Gráfico Certo" titleX={300}
            ticks={["108,00", "106,00", "104,00", "102,00", "100,00", "98,00", "96,00", "94,00"]}
            labelX={56} plot={{ x0: 74, x1: 583, top: 61, bottom: 243 }} first={80} day={13.73} legendX={213}
            labels={dateLabels.slice(0, 15)}
            series={[{ color: BLUE, min: 94, max: 108, points: seriesOf(1) }]}
          />
          <CursorSpot />
          <CursorCross width="17" height="17" fill="#fff" stroke="#000" strokeWidth="1.500">
            <path d="M5.500 1.500h5v4h4v5h-4v4h-5v-4h-4v-5h4z" />
          </CursorCross>
        </Sheet>
        <ScrollColumn>
          <ScrollButton aria-label="Scroll up"><Tri d="M0 5h8L4 0z" /></ScrollButton>
          <VTrack><VThumb /></VTrack>
          <ScrollButton aria-label="Scroll down"><Tri /></ScrollButton>
        </ScrollColumn>
      </Workspace>

      <TabBar>
        <TabArrows>
          <Tri w={5} h={8} d="M5 0v8L0 4z" c="#c4c4c4" />
          <Tri w={5} h={8} d="M0 0v8l5-4z" c="#c4c4c4" />
        </TabArrows>
        <SheetTab $w={160} $bg={BLUE} $fg="#fff">Grafico_Dinamico</SheetTab>
        <SheetTab $w={142} $active $fg={GREEN}>Comp_Graficos</SheetTab>
        <SheetTab $w={141} $bg={ORANGE}>Rank_Dinamico</SheetTab>
        <SheetTab $w={157} $bg="#ffc000">Conta_com_Juros</SheetTab>
        <SheetTab $w={121} $bg="#70ad47">Log_Retorno</SheetTab>
        <SheetTab $w={131} $bg="#5b9bd5">Rentabilidade</SheetTab>
        <AddTab aria-label="New sheet">{icons.plusCircle}</AddTab>
        <TabSpacer>{icons.dots}</TabSpacer>
        <HScroll>
          <ScrollButton aria-label="Scroll left"><Tri w={5} h={8} d="M5 0v8L0 4z" /></ScrollButton>
          <HTrack><HThumb /></HTrack>
          <ScrollButton aria-label="Scroll right"><Tri w={5} h={8} d="M0 0v8l5-4z" /></ScrollButton>
        </HScroll>
      </TabBar>

      <StatusBar>
        <button aria-label="Record macro">{icons.macro}</button>
        <Views>
          <ViewButton $on aria-label="Normal view">{icons.viewNormal}</ViewButton>
          <ViewButton aria-label="Page layout view">{icons.viewPage}</ViewButton>
          <ViewButton aria-label="Page break view">{icons.viewBreak}</ViewButton>
        </Views>
        <ZoomControls>
          <button aria-label="Zoom out"><svg width="10" height="10" stroke="#444" strokeWidth="1.300"><path d="M0 5h10" /></svg></button>
          <ZoomRange type="range" aria-label="Zoom" min="0" max="100" defaultValue="51" />
          <button aria-label="Zoom in"><svg width="10" height="10" stroke="#444" strokeWidth="1.300"><path d="M0 5h10M5 0v10" /></svg></button>
          <ZoomValue>100%</ZoomValue>
        </ZoomControls>
      </StatusBar>
      <Edge />
      <DropboxBadge aria-label="Dropbox">{icons.dropbox}</DropboxBadge>
    </Page>
  );
}
